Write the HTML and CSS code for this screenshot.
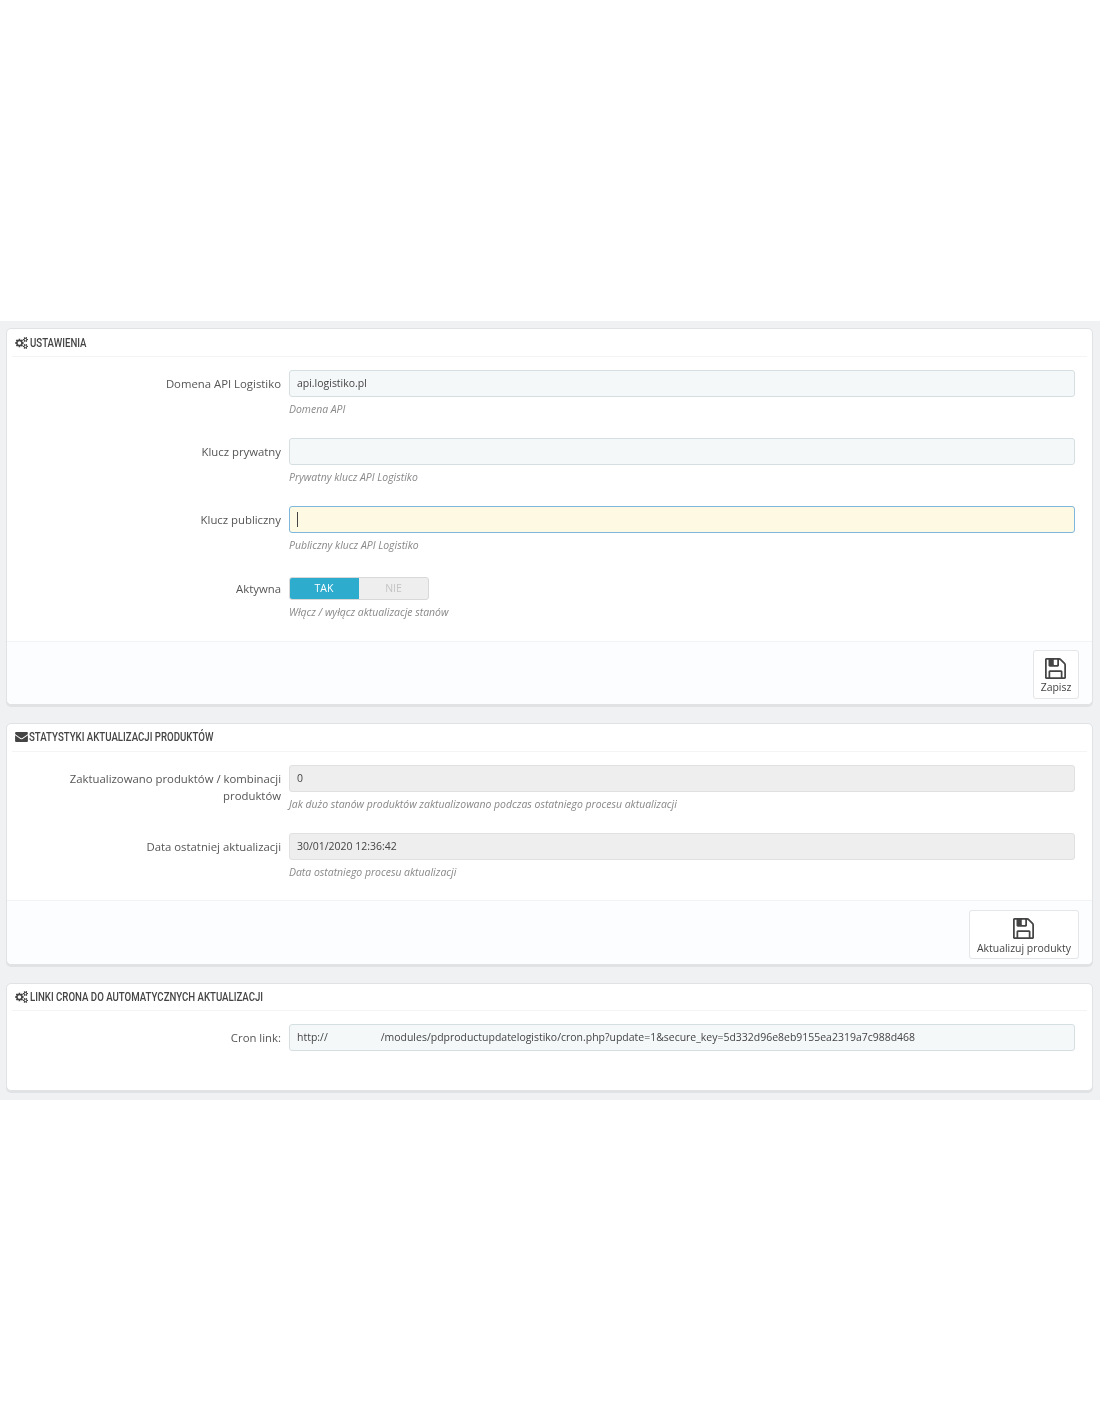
FILE: index.html
```html
<!DOCTYPE html>
<html lang="pl">
<head>
<meta charset="utf-8">
<title>Logistiko</title>
<link rel="stylesheet" href="styles.css">
</head>
<body>
<svg class="defs" width="0" height="0" aria-hidden="true">
  <symbol id="cogs" viewBox="0 0 2048 1792"><path d="M896 896q0-106-75-181t-181-75-181 75-75 181 75 181 181 75 181-75 75-181zm768 512q0-52-38-90t-90-38-90 38-38 90q0 53 37.5 90.5t90.5 37.5 90.5-37.5 37.5-90.5zm0-1024q0-52-38-90t-90-38-90 38-38 90q0 53 37.5 90.5t90.5 37.5 90.5-37.5 37.5-90.5zm-384 421v185q0 10-7 19.5t-16 10.5l-155 24q-11 35-32 76 34 48 90 115 7 11 7 20 0 12-7 19-23 30-82.5 89.5t-78.5 59.5q-11 0-21-7l-115-90q-37 19-77 31-11 108-23 155-7 24-30 24h-186q-11 0-20-7.5t-10-17.5l-23-153q-34-10-75-31l-118 89q-7 7-20 7-11 0-21-8-144-133-144-160 0-9 7-19 10-14 41-53t47-61q-23-44-35-82l-152-24q-10-1-17-9.5t-7-19.5v-185q0-10 7-19.5t16-10.5l155-24q11-35 32-76-34-48-90-115-7-11-7-20 0-12 7-20 22-30 82-89t79-59q11 0 21 7l115 90q34-18 77-32 11-108 23-154 7-24 30-24h186q11 0 20 7.5t10 17.5l23 153q34 10 75 31l118-89q8-7 20-7 11 0 21 8 144 133 144 160 0 8-7 19-12 16-42 54t-45 60q23 48 34 82l152 23q10 2 17 10.5t7 19.5zm640 533v140q0 16-149 31-12 27-30 52 51 113 51 138 0 4-4 7-122 71-124 71-8 0-46-47t-52-68q-20 2-30 2t-30-2q-14 21-52 68t-46 47q-2 0-124-71-4-3-4-7 0-25 51-138-18-25-30-52-149-15-149-31v-140q0-16 149-31 13-29 30-52-51-113-51-138 0-4 4-7 4-2 35-20t59-34 30-16q8 0 46 46.5t52 67.5q20-2 30-2t30 2q51-71 92-112l6-2q4 0 124 70 4 3 4 7 0 25-51 138 17 23 30 52 149 15 149 31zm0-1024v140q0 16-149 31-12 27-30 52 51 113 51 138 0 4-4 7-122 71-124 71-8 0-46-47t-52-68q-20 2-30 2t-30-2q-14 21-52 68t-46 47q-2 0-124-71-4-3-4-7 0-25 51-138-18-25-30-52-149-15-149-31v-140q0-16 149-31 13-29 30-52-51-113-51-138 0-4 4-7 4-2 35-20t59-34 30-16q8 0 46 46.5t52 67.5q20-2 30-2t30 2q51-71 92-112l6-2q4 0 124 70 4 3 4 7 0 25-51 138 17 23 30 52 149 15 149 31z"/></symbol>
  <symbol id="envelope" viewBox="0 128 1792 1536"><path d="M1792 710v794q0 66-47 113t-113 47h-1472q-66 0-113-47t-47-113v-794q44 49 101 87 362 246 497 345 57 42 92.5 65.5t94.5 48 110 24.5h2q51 0 110-24.5t94.5-48 92.5-65.5q170-123 498-345 57-39 100-87zm0-294q0 79-49 151t-122 123q-376 261-468 325-10 7-42.5 30.5t-54 38-52 32.5-57.5 27-50 9h-2q-23 0-50-9t-57.5-27-52-32.5-54-38-42.5-30.5q-91-64-262-182.5t-205-142.5q-62-42-117-115.5t-55-136.5q0-78 41.5-130t118.5-52h1472q65 0 112.5 47t47.5 113z"/></symbol>
  <symbol id="save" viewBox="0 128 1536 1536"><path d="M384 1536h768v-384h-768v384zm896 0h128v-896q0-14-10-38.5t-20-34.5l-281-281q-10-10-34-20t-39-10v416q0 40-28 68t-68 28h-576q-40 0-68-28t-28-68v-416h-128v1280h128v-416q0-40 28-68t68-28h832q40 0 68 28t28 68v416zm-384-928v-320q0-13-9.5-22.5t-22.5-9.5h-192q-13 0-22.5 9.5t-9.5 22.5v320q0 13 9.5 22.5t22.5 9.5h192q13 0 22.5-9.5t9.5-22.5zm640 32v928q0 40-28 68t-68 28h-1344q-40 0-68-28t-28-68v-1344q0-40 28-68t68-28h928q40 0 88 20t76 48l280 280q28 28 48 76t20 88z"/></symbol>
</svg>

<main class="page">
  <section class="panel panel-settings">
    <h3 class="panel-heading"><svg class="head-icon cog"><use href="#cogs"/></svg><span class="head-text">USTAWIENIA</span></h3>
    <div class="panel-body">
      <div class="row">
        <label class="label">Domena API Logistiko</label>
        <div class="field"><div class="input">api.logistiko.pl</div><p class="help">Domena API</p></div>
      </div>
      <div class="row">
        <label class="label">Klucz prywatny</label>
        <div class="field"><div class="input"></div><p class="help">Prywatny klucz API Logistiko</p></div>
      </div>
      <div class="row">
        <label class="label">Klucz publiczny</label>
        <div class="field"><div class="input input-focus"><span class="caret"></span></div><p class="help">Publiczny klucz API Logistiko</p></div>
      </div>
      <div class="row row-switch">
        <label class="label label-switch">Aktywna</label>
        <div class="field">
          <div class="switch"><span class="switch-on">TAK</span><span class="switch-off">NIE</span></div>
          <p class="help">Włącz / wyłącz aktualizacje stanów</p>
        </div>
      </div>
    </div>
    <footer class="panel-footer footer-settings">
      <button class="action" type="button"><svg class="save-icon"><use href="#save"/></svg><span>Zapisz</span></button>
    </footer>
  </section>

  <section class="panel panel-stats">
    <h3 class="panel-heading"><svg class="head-icon env"><use href="#envelope"/></svg><span class="head-text">STATYSTYKI AKTUALIZACJI PRODUKTÓW</span></h3>
    <div class="panel-body">
      <div class="row">
        <label class="label">Zaktualizowano produktów / kombinacji produktów</label>
        <div class="field"><div class="input input-readonly">0</div><p class="help">Jak dużo stanów produktów zaktualizowano podczas ostatniego procesu aktualizacji</p></div>
      </div>
      <div class="row">
        <label class="label">Data ostatniej aktualizacji</label>
        <div class="field"><div class="input input-readonly">30/01/2020 12:36:42</div><p class="help">Data ostatniego procesu aktualizacji</p></div>
      </div>
    </div>
    <footer class="panel-footer footer-stats">
      <button class="action action-wide" type="button"><svg class="save-icon"><use href="#save"/></svg><span>Aktualizuj produkty</span></button>
    </footer>
  </section>

  <section class="panel panel-cron">
    <h3 class="panel-heading"><svg class="head-icon cog"><use href="#cogs"/></svg><span class="head-text">LINKI CRONA DO AUTOMATYCZNYCH AKTUALIZACJI</span></h3>
    <div class="panel-body">
      <div class="row">
        <label class="label">Cron link:</label>
        <div class="field"><div class="input">http://<span class="redacted"></span>/modules/pdproductupdatelogistiko/cron.php?update=1&amp;secure_key=5d332d96e8eb9155ea2319a7c988d468</div></div>
      </div>
    </div>
  </section>
</main>
</body>
</html>
```

FILE: styles.css
```css
* { box-sizing: border-box; }
html, body { margin: 0; padding: 0; background: #fff; }
body {
  height: 1422px;
  padding-top: 321px;
  font-family: "Open Sans", "Liberation Sans", sans-serif;
  font-size: 12px;
  color: #555;
}
.defs { display: block; height: 0; }
.page {
  display: flex;
  flex-direction: column;
  gap: 18px;
  height: 779px;
  padding: 7px 7px 0 6px;
  background: #eff1f2;
  filter: blur(.3px);
}
.panel {
  background: #fff;
  border: 1px solid #e0e3e6;
  border-radius: 5px;
  box-shadow: 0 2px 0 rgba(0, 0, 0, .06);
  display: flex;
  flex-direction: column;
}
.panel-settings { height: 377px; }
.panel-stats { height: 242px; }
.panel-cron { height: 108px; }
.panel-heading {
  flex: none;
  display: flex;
  align-items: center;
  height: 28px;
  margin: 0 5px;
  padding: 0 3px;
  border-bottom: 1px solid #f3f4f5;
  font-family: "Liberation Sans Narrow", "Roboto", sans-serif;
  font-size: 12px;
  font-weight: 500;
  color: #444;
}
.panel-stats .panel-heading { padding-bottom: 2px; }
.panel-cron .panel-heading { height: 27px; }
.head-text {
  display: inline-block;
  transform: scaleX(.805);
  transform-origin: left center;
  white-space: nowrap;
}
.head-icon { fill: #444; flex: none; }
.head-icon.cog { width: 14px; height: 12px; margin-right: 1px; }
.head-icon.env { width: 13px; height: 11px; margin-right: 1px; }
.panel-body { flex: 1; min-height: 0; padding-top: 13px; }
.row {
  display: flex;
  height: 68px;
  column-gap: 8px;
}
.row-switch { height: 64px; padding-top: 3px; }
.label {
  flex: none;
  width: 274px;
  padding: 5px 0 0 40px;
  text-align: right;
  font-size: 11.35px;
  line-height: 17px;
  color: #555;
}
.label-switch { padding-top: 3px; }
.field { width: 786px; flex: none; }
.input {
  height: 27px;
  padding: 0 7px;
  background: #f5f8f9;
  border: 1px solid #d5dfe2;
  border-radius: 3px;
  font-size: 10.47px;
  line-height: 24px;
  color: #444;
  white-space: nowrap;
  overflow: hidden;
}
.input-readonly { background: #eeeeee; border-color: #dfe0e1; }
.input-focus {
  display: flex;
  align-items: center;
  background: #fef9e3;
  border-color: #7db7dd;
}
.caret { display: block; width: 1px; height: 15px; background: #444; }
.redacted { display: inline-block; width: 53px; }
.help {
  margin: 6px 0 0;
  font-size: 10.45px;
  line-height: 12px;
  font-style: italic;
  color: #888;
}
.switch {
  display: flex;
  width: 140px;
  height: 23px;
  background: #eeeeee;
  border: 1px solid #d8d8d8;
  border-radius: 3px;
  overflow: hidden;
  font-size: 10.5px;
  line-height: 21px;
  text-align: center;
}
.switch-on { flex: 0 0 70px; margin: -1px 0 -1px -1px; line-height: 22px; background: #2eacce; color: #fff; border-radius: 3px 0 0 3px; }
.switch-off { flex: 1; color: #c4c4c4; }
.panel-footer {
  flex: none;
  display: flex;
  justify-content: flex-end;
  padding: 9px 13px 0 0;
  background: #fcfdfe;
  border-top: 1px solid #f1f3f4;
  border-radius: 0 0 5px 5px;
}
.footer-settings { height: 63px; padding-top: 8px; }
.footer-stats { height: 64px; }
.action {
  display: flex;
  flex-direction: column;
  align-items: center;
  width: 46px;
  height: 49px;
  padding: 7px 0 0;
  background: #fff;
  border: 1px solid #e4e6e8;
  border-radius: 3px;
  font-family: inherit;
  font-size: 10.45px;
  line-height: 14px;
  color: #444;
}
.action-wide { width: 110px; }
.action-wide span { margin-top: 1px; }
.save-icon { width: 21px; height: 21px; fill: #444; flex: none; margin: 0 1px 1px 0; }
```
